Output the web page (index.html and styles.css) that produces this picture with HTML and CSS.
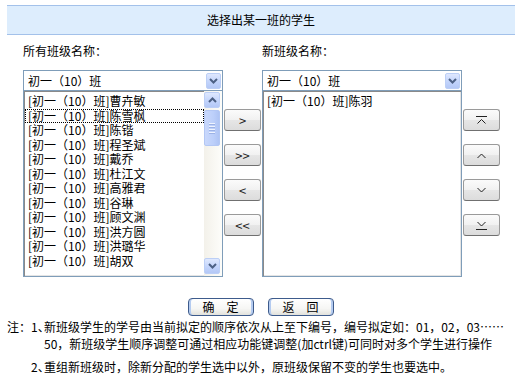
FILE: index.html
```html
<!DOCTYPE html>
<html lang="zh-CN">
<head>
<meta charset="UTF-8">
<title>选择出某一班的学生</title>
<link rel="stylesheet" href="styles.css">
</head>
<body>
<div class="title-bar">选择出某一班的学生</div>

<div class="main">
    <div class="panel">
        <div class="label">所有班级名称：</div>
        <div class="select">
            <span class="select-text">初一（10）班</span>
            <span class="drop-btn"><svg width="9" height="6" viewBox="0 0 9 6"><polyline points="1,1 4.5,4.5 8,1" fill="none" stroke="#4d6185" stroke-width="2"/></svg></span>
        </div>
        <div class="listbox">
            <div class="items">
                <div class="item">[初一（10）班]曹卉敏</div>
                <div class="item focused">[初一（10）班]陈雪枫</div>
                <div class="item">[初一（10）班]陈锴</div>
                <div class="item">[初一（10）班]程圣斌</div>
                <div class="item">[初一（10）班]戴乔</div>
                <div class="item">[初一（10）班]杜江文</div>
                <div class="item">[初一（10）班]高雅君</div>
                <div class="item">[初一（10）班]谷琳</div>
                <div class="item">[初一（10）班]顾文渊</div>
                <div class="item">[初一（10）班]洪方圆</div>
                <div class="item">[初一（10）班]洪璐华</div>
                <div class="item">[初一（10）班]胡双</div>
            </div>
            <div class="scrollbar">
                <div class="sb-btn"><svg width="9" height="6" viewBox="0 0 9 6"><polyline points="1,5 4.5,1.5 8,5" fill="none" stroke="#4d6185" stroke-width="2"/></svg></div>
                <div class="sb-thumb"><span class="grip"></span><span class="grip"></span><span class="grip"></span><span class="grip"></span></div>
                <div class="sb-track"></div>
                <div class="sb-btn"><svg width="9" height="6" viewBox="0 0 9 6"><polyline points="1,1 4.5,4.5 8,1" fill="none" stroke="#4d6185" stroke-width="2"/></svg></div>
            </div>
        </div>
    </div>

    <div class="btn-col">
        <button class="mv-btn">&gt;</button>
        <button class="mv-btn">&gt;&gt;</button>
        <button class="mv-btn">&lt;</button>
        <button class="mv-btn">&lt;&lt;</button>
    </div>

    <div class="panel">
        <div class="label">新班级名称：</div>
        <div class="select">
            <span class="select-text">初一（10）班</span>
            <span class="drop-btn"><svg width="9" height="6" viewBox="0 0 9 6"><polyline points="1,1 4.5,4.5 8,1" fill="none" stroke="#4d6185" stroke-width="2"/></svg></span>
        </div>
        <div class="listbox">
            <div class="items">
                <div class="item">[初一（10）班]陈羽</div>
            </div>
        </div>
    </div>

    <div class="btn-col">
        <button class="mv-btn"><svg width="11" height="9" viewBox="0 0 11 9"><line x1="0" y1="0.5" x2="11" y2="0.5" stroke="#222"/><polyline points="1.5,7.5 5.5,3.5 9.5,7.5" fill="none" stroke="#222"/></svg></button>
        <button class="mv-btn"><svg width="11" height="9" viewBox="0 0 11 9"><polyline points="1.5,7 5.5,3 9.5,7" fill="none" stroke="#222"/></svg></button>
        <button class="mv-btn"><svg width="11" height="9" viewBox="0 0 11 9"><polyline points="1.5,2 5.5,6 9.5,2" fill="none" stroke="#222"/></svg></button>
        <button class="mv-btn"><svg width="11" height="9" viewBox="0 0 11 9"><polyline points="1.5,1 5.5,5 9.5,1" fill="none" stroke="#222"/><line x1="0" y1="8.5" x2="11" y2="8.5" stroke="#222"/></svg></button>
    </div>
</div>

<div class="actions">
    <button class="act-btn">确&emsp;定</button>
    <button class="act-btn">返&emsp;回</button>
</div>

<div class="notes">
    <div class="note-row">
        <div class="note-head">注：</div>
        <div class="note-num">1<span class="dun">、</span></div>
        <div class="note-text">新班级学生的学号由当前拟定的顺序依次从上至下编号，编号拟定如：01，02，03……<br>50，新班级学生顺序调整可通过相应功能键调整(加ctrl键)可同时对多个学生进行操作</div>
    </div>
    <div class="note-row">
        <div class="note-head"></div>
        <div class="note-num">2<span class="dun">、</span></div>
        <div class="note-text">重组新班级时，除新分配的学生选中以外，原班级保留不变的学生也要选中。</div>
    </div>
</div>
</body>
</html>
```

FILE: styles.css
```css
body {
    margin: 0;
    width: 522px;
    font-family: "Noto Sans CJK SC", "Liberation Sans", sans-serif;
    font-size: 12px;
    color: #000;
    background-color: #fff;
}
.title-bar {
    margin: 5px 7px 0;
    height: 28px;
    line-height: 28px;
    text-align: center;
    background-color: #ddedfd;
    border-top: 1px solid #a3c1ea;
    border-bottom: 1px solid #a3c1ea;
}
.main {
    display: flex;
    margin-top: 9px;
    padding-left: 23px;
}
.panel {
    width: 200px;
}
.label {
    height: 26px;
    line-height: 14px;
}
.select {
    display: flex;
    align-items: center;
    justify-content: space-between;
    height: 19px;
    border: 1px solid #7f9db9;
    background-color: #fff;
    padding: 0 1px 0 4px;
}
.select-text {
    line-height: 19px;
}
.drop-btn, .sb-btn {
    display: flex;
    align-items: center;
    justify-content: center;
    width: 15px;
    height: 16px;
    box-sizing: border-box;
    border: 1px solid #bccff6;
    border-radius: 2px;
    background: linear-gradient(#dfe8fe, #c1d3fb 60%, #b4c8f6);
}
.listbox {
    display: flex;
    height: 185px;
    border: 1px solid #7f9db9;
    border-top: none;
    background-color: #fff;
    box-shadow: inset 1px 1px 0 #8a8a8a, inset -1px -1px 0 #e4e4e4;
}
.items {
    flex: 1;
    padding: 3px 0 0 1px;
}
.item {
    line-height: 14.5px;
    padding-left: 3px;
    white-space: nowrap;
}
.item.focused {
    outline: 1px dotted #000;
    outline-offset: -1px;
}
.scrollbar {
    display: flex;
    flex-direction: column;
    width: 16px;
    padding: 1px 2px 2px 0;
    background: linear-gradient(90deg, #f3f1ea, #fdfdfa);
}
.sb-btn {
    width: 16px;
}
.sb-thumb {
    display: flex;
    flex-direction: column;
    align-items: center;
    justify-content: center;
    gap: 1px;
    height: 36px;
    margin-top: 2px;
    box-sizing: border-box;
    border: 1px solid #b3c7f4;
    border-radius: 2px;
    background: linear-gradient(90deg, #c9d8fc, #bccffa 60%, #afc4f4);
}
.grip {
    width: 6px;
    height: 1px;
    background-color: #eef3fe;
    border-bottom: 1px solid #9cb2e6;
}
.sb-track {
    flex: 1;
}
.btn-col {
    display: flex;
    flex-direction: column;
    gap: 13px;
    width: 37px;
    margin: 0 1px 0 1px;
    padding-top: 65px;
}
.mv-btn {
    display: flex;
    align-items: center;
    justify-content: center;
    height: 22px;
    padding: 0;
    font-family: "Noto Sans CJK SC", sans-serif;
    font-size: 13px;
    line-height: 13px;
    color: #222;
    border: 1px solid #9a9a9a;
    border-bottom-color: #707070;
    border-radius: 3px;
    background: linear-gradient(#fbfbfb, #f1f1f1 50%, #e6e6e6 51%, #dcdcdc);
}
.actions {
    display: flex;
    justify-content: center;
    gap: 14px;
    margin-top: 21px;
    padding-right: 1px;
}
.act-btn {
    width: 66px;
    height: 18px;
    padding: 0;
    font-family: "Noto Sans CJK SC", sans-serif;
    font-size: 12px;
    line-height: 14px;
    color: #000;
    border: 1px solid #3d5b8c;
    border-radius: 4px;
    background: linear-gradient(#ffffff, #f6f6f4 60%, #e2e2dc);
    box-shadow: inset 2px 0 0 #b4cbf0, inset -2px 0 0 #b4cbf0;
}
.notes {
    margin-top: 2px;
    padding-left: 7px;
}
.note-row {
    display: flex;
    line-height: 17px;
    margin-bottom: 6px;
}
.note-head {
    width: 24px;
}
.note-num {
    width: 13px;
    white-space: nowrap;
}
.dun {
    letter-spacing: -6px;
}
.note-text {
    white-space: nowrap;
}
```
